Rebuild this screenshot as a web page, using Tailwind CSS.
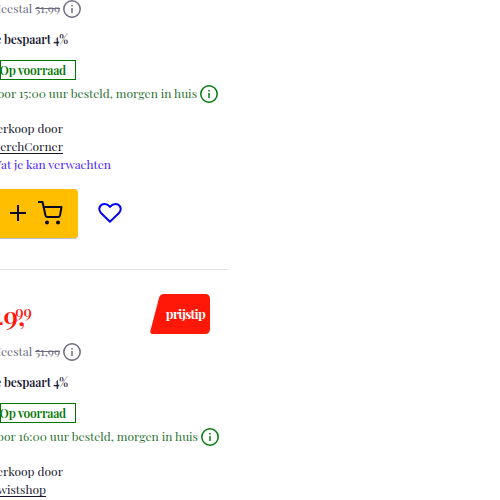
<!DOCTYPE html>
<html lang="nl">
<head>
<meta charset="utf-8">
<script src="https://cdn.jsdelivr.net/npm/@tailwindcss/browser@4"></script>
</head>
<body class="h-[500px] w-[500px] overflow-hidden bg-white font-['Playfair_Display','Liberation_Serif',serif] text-[12px] leading-[18px] text-[#171730] whitespace-nowrap">
<svg class="hidden">
  <symbol id="info" viewBox="0 0 20 20"><circle cx="10" cy="10" r="8.200" fill="none" stroke="currentColor" stroke-width="1.500"/><path d="M10 9v5M10 6v1.500" stroke="currentColor" stroke-width="1.500"/></symbol>
</svg>
<main class="flex w-[228px] flex-col overflow-hidden">
  <section class="flex h-[270px] flex-col items-start border-b border-[#e5e5e5]">
    <div class="flex h-[18px] w-[82px] items-center justify-end text-[#6c6c80]"><span class="pb-[2px]">Meestal</span><s class="ml-[3px] w-[26px] pb-[2px]">51,99</s><svg class="ml-[2px] size-5 shrink-0"><use href="#info"/></svg></div>
    <div class="mt-[12px] flex h-[18px] w-[68px] justify-end font-semibold tracking-[-0.1px]">Je bespaart 4%</div>
    <div class="mt-[12px] flex h-5 w-[76px] items-center justify-end border border-[#007500] pr-[9px] font-semibold tracking-[-0.2px] text-[#007500]">Op voorraad</div>
    <div class="mt-[4px] flex h-5 w-[219px] items-center justify-end text-[#2b7332]"><span class="pb-[2px]">Voor 15:00 uur besteld, morgen in huis</span><svg class="ml-[2px] size-5 shrink-0 text-[#007c0c]"><use href="#info"/></svg></div>
    <div class="mt-[15px] flex w-[63px] justify-end">Verkoop door</div>
    <a class="flex w-[63px] justify-end underline underline-offset-2">MerchCorner</a>
    <a class="flex w-[111px] justify-end text-[#4b20ff]">Wat je kan verwachten</a>
    <div class="mt-[16px] flex items-center">
      <button class="flex h-[49px] w-[78px] items-center rounded-r-[4px] bg-[#ffbe00] pb-[2px] text-[#080820] shadow-[0_1px_0_#c0bfc8]">
        <svg class="ml-[9px] size-[18px]" viewBox="0 0 18 18" fill="none" stroke="currentColor" stroke-width="2"><path d="M1 9h16M9 1v16"/></svg>
        <svg class="ml-[10px] size-[26px]" viewBox="0 0 26 26" fill="none" stroke="currentColor" stroke-width="2" stroke-linejoin="round"><path d="M1 2h4.500l3 13.500q.5 1.500 2 1.500H21q1.500 0 2-1.500L24.500 7H7"/><circle cx="10" cy="22.500" r="2" fill="currentColor" stroke="none"/><circle cx="21" cy="22.500" r="2" fill="currentColor" stroke="none"/></svg>
      </button>
      <svg class="mb-px ml-5 size-6" viewBox="0 0 24 24" fill="none" stroke="#0000f5" stroke-width="2"><path d="M12 20.700 3 12C-.5 8 2 3 6.500 3c2.600 0 4 1.200 5.500 2.800C13.500 4.200 14.900 3 17.500 3 22 3 24.500 8 21 12Z"/></svg>
    </div>
  </section>
  <section class="flex flex-col items-start">
    <div class="mt-[24px] flex h-10 w-[210px] items-start">
      <div class="flex w-[32px] justify-end font-semibold text-[#ff1607]"><span class="mt-[8px] text-[27px] leading-[27px]">49,</span><sup class="top-0 -ml-[10px] mt-[10px] text-[16px] font-medium leading-4">99</sup></div>
      <div class="relative ml-auto flex h-10 w-[60px] items-center justify-end pr-[5px] text-[13px] font-bold tracking-[-0.7px] text-white"><svg class="absolute inset-0 h-10 w-[60px]" viewBox="0 0 60 40"><path fill="#ff1808" d="M14 0H55q5 0 5 5V35q0 5-5 5H3Q-.5 40 .6 36L9 4Q10 0 14 0Z"/></svg><span class="relative">prijstip</span></div>
    </div>
    <div class="mt-[9px] flex h-[18px] w-[82px] items-center justify-end text-[#6c6c80]"><span class="pb-[2px]">Meestal</span><s class="ml-[3px] w-[26px] pb-[2px]">51,99</s><svg class="ml-[2px] size-5 shrink-0"><use href="#info"/></svg></div>
    <div class="mt-[12px] flex h-[18px] w-[68px] justify-end font-semibold tracking-[-0.1px]">Je bespaart 4%</div>
    <div class="mt-[12px] flex h-5 w-[76px] items-center justify-end border border-[#007500] pr-[9px] font-semibold tracking-[-0.2px] text-[#007500]">Op voorraad</div>
    <div class="mt-[4px] flex h-5 w-[220px] items-center justify-end text-[#2b7332]"><span class="pb-[2px]">Voor 16:00 uur besteld, morgen in huis</span><svg class="ml-[2px] size-5 shrink-0 text-[#007c0c]"><use href="#info"/></svg></div>
    <div class="mt-[15px] flex w-[63px] justify-end">Verkoop door</div>
    <a class="flex w-[46px] justify-end underline underline-offset-2">Twistshop</a>
  </section>
</main>
</body>
</html>
